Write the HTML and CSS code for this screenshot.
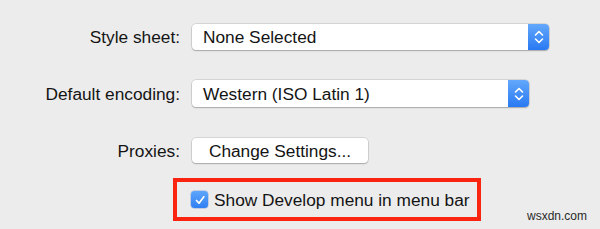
FILE: index.html
```html
<!DOCTYPE html>
<html>
<head>
<meta charset="utf-8">
<link rel="stylesheet" href="styles.css">
</head>
<body>
<div class="prefs">
  <div class="row row-style">
    <div class="label">Style sheet:</div>
    <div class="popup popup-wide">
      <span class="popup-text">None Selected</span>
      <span class="stepper">
        <svg width="10" height="16" viewBox="0 0 10 16"><path d="M1.5 6 L5 2.5 L8.5 6 M1.5 10 L5 13.5 L8.5 10" fill="none" stroke="#fff" stroke-width="1.6" stroke-linecap="round" stroke-linejoin="round"/></svg>
      </span>
    </div>
  </div>
  <div class="row row-enc">
    <div class="label">Default encoding:</div>
    <div class="popup popup-mid">
      <span class="popup-text">Western (ISO Latin 1)</span>
      <span class="stepper">
        <svg width="10" height="16" viewBox="0 0 10 16"><path d="M1.5 6 L5 2.5 L8.5 6 M1.5 10 L5 13.5 L8.5 10" fill="none" stroke="#fff" stroke-width="1.6" stroke-linecap="round" stroke-linejoin="round"/></svg>
      </span>
    </div>
  </div>
  <div class="row row-proxy">
    <div class="label">Proxies:</div>
    <div class="button">Change Settings...</div>
  </div>
  <div class="row row-check">
    <div class="label"></div>
    <div class="highlight">
      <span class="checkbox">
        <svg width="12" height="12" viewBox="0 0 12 12"><path d="M2.5 6.5 L5 9.2 L9.8 2.8" fill="none" stroke="#fff" stroke-width="1.7" stroke-linecap="round" stroke-linejoin="round"/></svg>
      </span>
      <span class="check-text">Show Develop menu in menu bar</span>
    </div>
  </div>
  <div class="watermark">wsxdn.com</div>
</div>
</body>
</html>
```

FILE: styles.css
```css
html, body {
  margin: 0;
  padding: 0;
  background: #ececec;
}
body {
  width: 600px;
  height: 229px;
  overflow: hidden;
  font-family: "Liberation Sans", Arial, sans-serif;
  font-size: 17.3px;
  color: #141414;
}
.prefs {
  display: flex;
  flex-direction: column;
  padding-top: 24px;
  position: relative;
  height: 205px;
}
.row {
  display: grid;
  grid-template-columns: 180px auto;
  column-gap: 12px;
  align-items: center;
}
.row-enc { margin-top: 30px; }
.row-proxy { margin-top: 31px; }
.row-check { margin-top: 15px; }
.label {
  text-align: right;
  white-space: nowrap;
  padding-top: 1px;
}
.popup {
  height: 26px;
  background: #fff;
  border-radius: 4px;
  box-shadow: 0 0 0 0.5px rgba(0,0,0,0.18), 0 1px 1.5px rgba(0,0,0,0.22);
  display: flex;
  align-items: center;
  justify-content: space-between;
}
.popup-wide { width: 357px; }
.popup-mid { width: 337px; height: 27px; }
.popup-text {
  padding-left: 11px;
  padding-top: 1px;
  white-space: nowrap;
}
.stepper {
  width: 21px;
  align-self: stretch;
  border-radius: 0 4px 4px 0;
  background: linear-gradient(#63a8fb, #2979f3);
  display: flex;
  align-items: center;
  justify-content: center;
}
.stepper svg { display: block; }
.button {
  width: 176px;
  height: 25px;
  box-sizing: border-box;
  background: #fff;
  border-radius: 4px;
  box-shadow: 0 0 0 0.5px rgba(0,0,0,0.18), 0 1px 1.5px rgba(0,0,0,0.22);
  display: flex;
  align-items: center;
  justify-content: center;
  padding-top: 1px;
  white-space: nowrap;
}
.highlight {
  margin-left: -19px;
  width: 308px;
  height: 43px;
  box-sizing: border-box;
  border: 4px solid #fb2410;
  display: flex;
  align-items: center;
  padding-left: 14px;
}
.checkbox {
  width: 17px;
  height: 17px;
  border-radius: 3.5px;
  background: linear-gradient(#5ea6fb, #2f7ff4);
  box-shadow: 0 0 0 0.5px rgba(0,60,180,0.35);
  display: flex;
  align-items: center;
  justify-content: center;
  flex-shrink: 0;
}
.checkbox svg { display: block; }
.check-text {
  margin-left: 6px;
  white-space: nowrap;
  padding-top: 1px;
}
.watermark {
  position: absolute;
  left: 527px;
  top: 209px;
  font-size: 12px;
  color: #2a2a2a;
}
```
